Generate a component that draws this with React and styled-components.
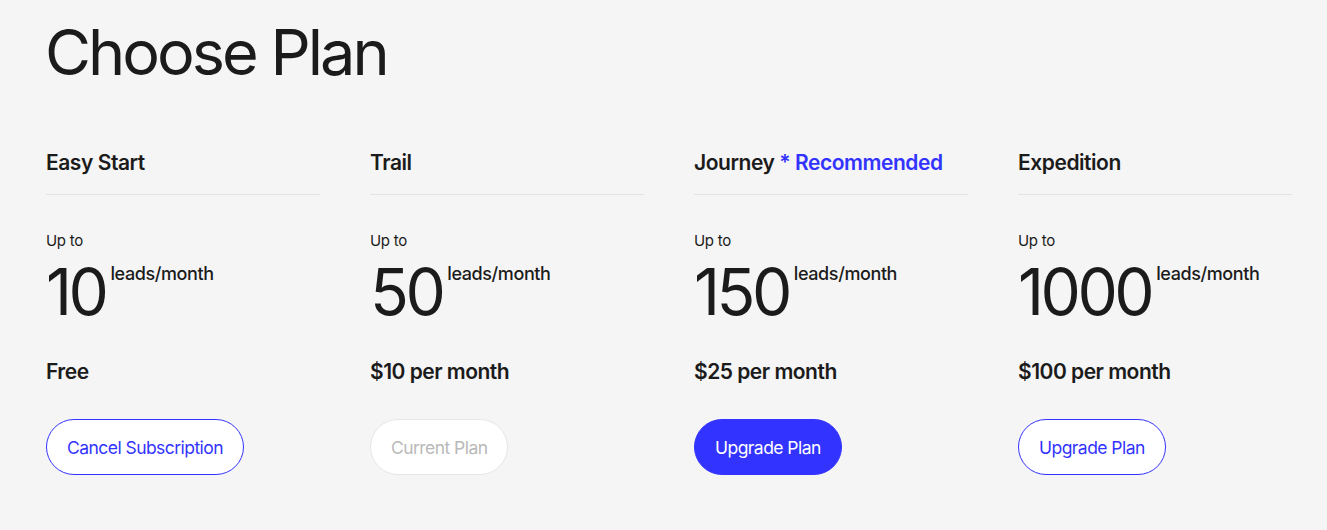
import React from 'react'
import styled, { createGlobalStyle } from 'styled-components'

const GlobalStyle = createGlobalStyle`
  html, body {
    margin: 0;
    padding: 0;
    background: #f5f5f5;
  }
  body {
    font-family: Inter, "Liberation Sans", sans-serif;
    color: #1b1b1b;
  }
`

const plans = [
  { name: 'Easy Start', leads: '10', price: 'Free', action: 'Cancel Subscription', variant: 'outline' },
  { name: 'Trail', leads: '50', price: '$10 per month', action: 'Current Plan', variant: 'muted' },
  { name: 'Journey', recommended: true, leads: '150', price: '$25 per month', action: 'Upgrade Plan', variant: 'filled' },
  { name: 'Expedition', leads: '1000', price: '$100 per month', action: 'Upgrade Plan', variant: 'outline' },
]

function App() {
  return (
    <>
      <GlobalStyle />
      <Page>
        <Title>Choose Plan</Title>
        <PlanGrid>
          {plans.map((p, idx) => (
            <PlanColumn key={idx}>
              <PlanName>
                {p.name}
                {p.recommended && <Recommended> * Recommended</Recommended>}
              </PlanName>
              <Divider />
              <UpTo>Up to</UpTo>
              <LeadsRow>
                <LeadsNumber>{p.leads}</LeadsNumber>
                <LeadsUnit>leads/month</LeadsUnit>
              </LeadsRow>
              <Price>{p.price}</Price>
              <PlanButton variant={p.variant}>{p.action}</PlanButton>
            </PlanColumn>
          ))}
        </PlanGrid>
      </Page>
    </>
  )
}

const Page = styled.div`
  padding: 14px 35px 0 45px;
  height: 530px;
  box-sizing: border-box;
`

const Title = styled.h1`
  margin: 0;
  font-size: 63px;
  font-weight: 400;
  letter-spacing: -3px;
  line-height: 76px;
`

const PlanGrid = styled.div`
  display: grid;
  grid-template-columns: repeat(4, 274px);
  column-gap: 50px;
  margin-top: 59px;
  padding-left: 1px;
`

const PlanColumn = styled.div`
  display: flex;
  flex-direction: column;
  align-items: flex-start;
`

const PlanName = styled.div`
  font-size: 21px;
  font-weight: 600;
  letter-spacing: -0.45px;
  line-height: 28px;
`

const Recommended = styled.span`
  color: #3333ff;
`

const Divider = styled.div`
  align-self: stretch;
  height: 1px;
  background: #e4e4e4;
  margin-top: 17px;
`

const UpTo = styled.div`
  margin-top: 36px;
  font-size: 15px;
  line-height: 20px;
  letter-spacing: -0.3px;
`

const LeadsRow = styled.div`
  display: flex;
  align-items: flex-start;
  margin-top: 9px;
`

const LeadsNumber = styled.div`
  font-size: 64px;
  line-height: 64px;
  letter-spacing: -3.5px;
  margin-right: 5px;
`

const LeadsUnit = styled.div`
  font-size: 18px;
  font-weight: 500;
  letter-spacing: -0.4px;
  line-height: 22px;
  margin-top: 3px;
`

const Price = styled.div`
  margin-top: 34px;
  font-size: 21px;
  font-weight: 600;
  letter-spacing: -0.5px;
  line-height: 28px;
`

const PlanButton = styled.button`
  margin-top: 33px;
  height: 56px;
  padding: 0 20px;
  border-radius: 28px;
  font-family: inherit;
  font-size: 17.5px;
  letter-spacing: -0.55px;
  cursor: pointer;
  border: 1.5px solid
    ${(props) => (props.variant === 'muted' ? '#e6e6e6' : '#3333ff')};
  background: ${(props) => (props.variant === 'filled' ? '#3333ff' : '#fff')};
  color: ${(props) =>
    props.variant === 'filled' ? '#fff' : props.variant === 'muted' ? '#b9b9b9' : '#3333ff'};
`

export default App
